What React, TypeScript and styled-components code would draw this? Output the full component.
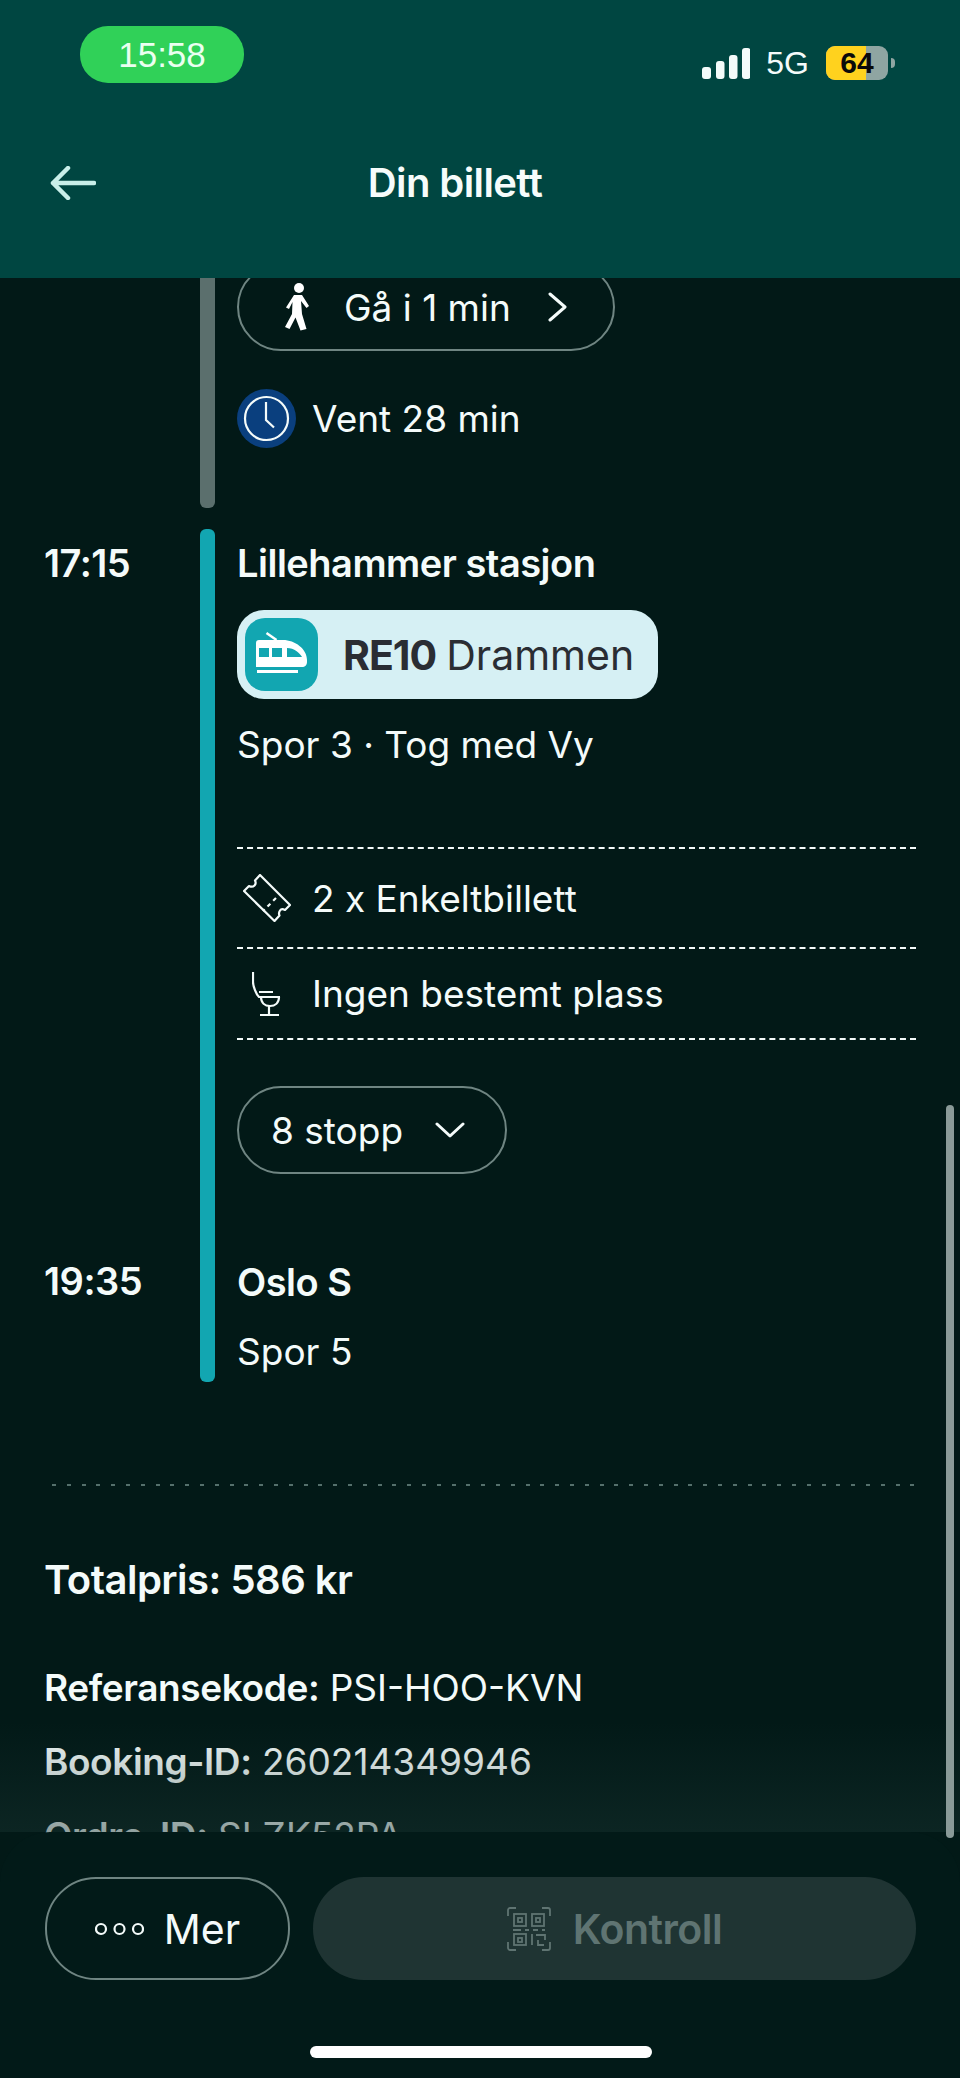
import React from 'react';
import styled, { createGlobalStyle } from 'styled-components';

const Global = createGlobalStyle`
  html, body {
    margin: 0;
    padding: 0;
    background: #021917;
  }
  * {
    box-sizing: border-box;
  }
`;

const APP_FONT = `Inter, "Open Sans", sans-serif`;

const Screen = styled.div`
  position: relative;
  width: 960px;
  height: 2078px;
  display: flex;
  flex-direction: column;
  overflow: hidden;
  background: #021917;
  color: #f4fbfa;
  font-family: ${APP_FONT};
`;

const Header = styled.header`
  position: relative;
  z-index: 2;
  flex: none;
  height: 278px;
  background: #004641;
  display: flex;
  flex-direction: column;
`;

const StatusBar = styled.div`
  height: 110px;
  padding: 26px 65px 0 80px;
  display: flex;
  justify-content: space-between;
  align-items: flex-start;
`;

const TimePill = styled.div`
  width: 164px;
  height: 57px;
  border-radius: 28px;
  background: #30d158;
  display: flex;
  align-items: center;
  justify-content: center;
  font-family: "Liberation Sans", sans-serif;
  font-size: 35px;
  color: #eafff0;
`;

const StatusRight = styled.div`
  margin-top: 20px;
  display: flex;
  align-items: center;
  height: 34px;
`;

const NetworkLabel = styled.span`
  margin: 0 17px 0 16px;
  font-family: "Liberation Sans", sans-serif;
  font-size: 32px;
  line-height: 34px;
  color: #f4fbfa;
`;

const Battery = styled.div`
  position: relative;
  width: 62px;
  height: 34px;
  border-radius: 9px;
  overflow: hidden;
  background: #8fa5a2;
  display: flex;
  align-items: center;
  justify-content: center;
  font-family: "Liberation Sans", sans-serif;
  font-weight: 700;
  font-size: 30px;
  color: #0a0a0a;
`;

const BatteryLevel = styled.div`
  position: absolute;
  left: 0;
  top: 0;
  bottom: 0;
  background: #ffd21e;
`;

const BatteryLabel = styled.span`
  position: relative;
`;

const BatteryNub = styled.div`
  width: 4px;
  height: 10px;
  margin-left: 3px;
  border-radius: 0 4px 4px 0;
  background: #8fa5a2;
`;

const NavBar = styled.div`
  flex: 1;
  padding: 0 50px 22px;
  display: flex;
  align-items: center;
`;

const NavTitle = styled.h1`
  flex: 1;
  margin: 0 96px 0 0;
  text-align: center;
  font-size: 40px;
  line-height: 48px;
  font-weight: 600;
  letter-spacing: -0.6px;
  color: #f6fcfb;
`;

const Scroller = styled.main`
  margin-top: -15px;
  flex: 1;
  min-height: 0;
`;

const Leg = styled.section<{ $height: number }>`
  height: ${(p) => p.$height}px;
  padding-left: 44px;
  display: flex;
`;

const TimeColumn = styled.div`
  flex: none;
  width: 156px;
  display: flex;
  flex-direction: column;
`;

const LegTime = styled.div<{ $top: number }>`
  margin-top: ${(p) => p.$top}px;
  font-size: 38px;
  line-height: 48px;
  font-weight: 600;
  letter-spacing: -0.5px;
`;

const Rail = styled.div<{ $color: string }>`
  flex: none;
  width: 15px;
  border-radius: 0 0 6px 6px;
  background: ${(p) => p.$color};
`;

const RideRail = styled(Rail)`
  border-radius: 6px;
`;

const LegBody = styled.div`
  flex: 1;
  margin: 0 44px 0 22px;
  display: flex;
  flex-direction: column;
  align-items: flex-start;
`;

const OutlinePill = styled.div<{ $width: number }>`
  width: ${(p) => p.$width}px;
  height: 88px;
  border: 2px solid #6f8582;
  border-radius: 44px;
  display: flex;
  align-items: center;
  font-size: 37px;
`;

const WaitRow = styled.div`
  margin-top: 38px;
  display: flex;
  align-items: center;
  gap: 16px;
  font-size: 37px;
  line-height: 59px;
`;

const StopName = styled.div<{ $top: number }>`
  margin-top: ${(p) => p.$top}px;
  font-size: 38px;
  line-height: 48px;
  font-weight: 600;
  letter-spacing: -0.5px;
`;

const LineBadge = styled.div`
  margin-top: 23px;
  width: 421px;
  height: 89px;
  padding: 8px;
  border-radius: 27px;
  background: #d6f0f4;
  color: #2a2d33;
  display: flex;
  align-items: center;
  font-size: 41px;
`;

const LineIcon = styled.div`
  width: 73px;
  height: 73px;
  border-radius: 20px;
  background: #12a6b1;
  margin-right: 25px;
  flex: none;
`;

const LineCode = styled.strong`
  font-weight: 700;
  letter-spacing: -1px;
  margin-right: 10px;
`;

const Detail = styled.div<{ $top: number }>`
  margin-top: ${(p) => p.$top}px;
  font-size: 37px;
  line-height: 48px;
`;

const InfoRow = styled.div<{ $height: number }>`
  align-self: stretch;
  height: ${(p) => p.$height}px;
  border-bottom: 2px dashed #f4fbfa;
  display: flex;
  align-items: center;
  font-size: 37px;
`;

const InfoList = styled.div`
  align-self: stretch;
  margin-top: 78px;
  border-top: 2px dashed #f4fbfa;
`;

const InfoIcon = styled.div`
  width: 75px;
  display: flex;
  justify-content: center;
  padding-right: 16px;
  flex: none;
`;

const StopsPill = styled(OutlinePill)`
  margin-top: 46px;
  padding-left: 32px;
`;

const Divider = styled.div`
  height: 2px;
  margin: 102px 44px 0 52px;
  background: repeating-linear-gradient(to right, #55706c 0 4px, transparent 4px 14.8px);
`;

const Summary = styled.div`
  padding: 0 44px;
`;

const TotalPrice = styled.div`
  margin-top: 70px;
  font-size: 40px;
  line-height: 48px;
  font-weight: 600;
  letter-spacing: -0.5px;
`;

const BookingLine = styled.div<{ $top: number }>`
  margin-top: ${(p) => p.$top}px;
  font-size: 37px;
  line-height: 48px;
  strong {
    font-weight: 600;
    letter-spacing: -0.4px;
  }
`;

const Haze = styled.div`
  position: absolute;
  left: 0;
  right: 0;
  bottom: 246px;
  height: 110px;
  background: linear-gradient(to bottom, rgba(24, 52, 49, 0), rgba(24, 52, 49, 0.45));
  pointer-events: none;
`;

const Scrollbar = styled.div`
  position: absolute;
  right: 6px;
  top: 1105px;
  width: 8px;
  height: 733px;
  border-radius: 4px;
  background: #8a9a98;
`;

const BottomSheet = styled.footer`
  position: absolute;
  left: 0;
  right: 0;
  bottom: 0;
  height: 246px;
  padding: 45px 44px 0 45px;
  border-radius: 50px 50px 0 0;
  background: #021a18;
`;

const ButtonRow = styled.div`
  display: flex;
  gap: 23px;
`;

const MoreButton = styled.button`
  flex: none;
  width: 245px;
  height: 103px;
  padding: 0;
  border: 2px solid #6f8582;
  border-radius: 51px;
  background: transparent;
  color: #f4fbfa;
  font-family: ${APP_FONT};
  font-size: 41px;
  display: flex;
  align-items: center;
  justify-content: center;
  gap: 20px;
`;

const ControlButton = styled.button`
  flex: 1;
  height: 103px;
  padding: 0;
  border: none;
  border-radius: 51px;
  background: #1f3433;
  color: #5f7472;
  font-family: ${APP_FONT};
  font-size: 41px;
  font-weight: 600;
  letter-spacing: -0.5px;
  display: flex;
  align-items: center;
  justify-content: center;
  gap: 22px;
`;

const HomeIndicator = styled.div`
  width: 342px;
  height: 12px;
  margin: 66px auto 0;
  border-radius: 6px;
  background: #ffffff;
`;

const PillIcon = styled.div<{ $left: number; $right: number }>`
  flex: none;
  display: flex;
  margin: 0 ${(p) => p.$right}px 0 ${(p) => p.$left}px;
`;

const SignalBars = () => (
  <svg width="48" height="31" viewBox="0 0 48 31" fill="#f4fbfa">
    <rect x="0" y="19" width="9" height="12" rx="3" />
    <rect x="14" y="13" width="8.5" height="18" rx="3" />
    <rect x="27" y="7" width="8.5" height="24" rx="3" />
    <rect x="40" y="0" width="8.5" height="31" rx="3" />
  </svg>
);

const BackArrow = () => (
  <svg width="46" height="34" viewBox="0 0 46 34" fill="none" stroke="#c9efe9" strokeWidth="4.5" strokeLinecap="round" strokeLinejoin="round">
    <path d="M44 17H3M18 2 3 17l15 15" />
  </svg>
);

const Walker = () => (
  <svg width="25" height="48" viewBox="0 0 25 48" fill="#ffffff">
    <circle cx="14" cy="5" r="5" />
    <path d="M9 12h8l7 11-2.500 2-5.500-7 1 13 4.500 15-6 1.500-5-13-6 11.500L0 44l7-13 .5-12-3.500 7-3-1.500z" />
  </svg>
);

const Clock = () => (
  <svg width="59" height="59" viewBox="0 0 59 59" fill="none">
    <circle cx="29.500" cy="29.500" r="29.500" fill="#0a3f7e" />
    <circle cx="29.500" cy="29.500" r="21.500" stroke="#f4fbfa" strokeWidth="2.200" />
    <path d="M29 13v18l8 7.500" stroke="#f4fbfa" strokeWidth="2.200" />
  </svg>
);

const Train = () => (
  <svg width="73" height="73" viewBox="0 0 73 73">
    <path d="M21.500 15 31.500 22" stroke="#fff" strokeWidth="2.500" />
    <path fillRule="evenodd" fill="#fff" d="M14 22h24c12 0 24 9 24 20v2c0 3-2 5-5 5H11V25c0-2 1-3 3-3zM14 30v9h10v-9zM27 30v9h10v-9zM42 30v9h15c-2-4-8-9-15-9z" />
    <rect x="12" y="52" width="41" height="3" fill="#fff" />
  </svg>
);

const Ticket = () => (
  <svg width="48" height="48" viewBox="0 0 48 48" fill="none" stroke="#f4fbfa" strokeWidth="2.200" strokeLinejoin="round">
    <path d="M17 1 47 31l-5 5c-2-1-4-1-5 .5s-1.500 3-.5 5l-5 5.500L1 17l5-5c2 1 4 1 5.500-.5s1.500-3 .5-5z" />
    <path d="M33 24 20 37" strokeDasharray="4 4" />
  </svg>
);

const Seat = () => (
  <svg width="30" height="44" viewBox="0 0 30 44" fill="none" stroke="#f4fbfa" strokeWidth="2.200" strokeLinejoin="round">
    <path d="M1 0v10c0 4 3 12 6 15h21" />
    <path d="M7 20h14M9 25c0 6 4 9 9 9s9-3 9-9M17 34v9M8 43h19" />
  </svg>
);

const Chevron = ({ down }: { down?: boolean }) => (
  <svg width={down ? 30 : 20} height={down ? 16 : 30} viewBox={down ? '0 0 30 16' : '0 0 20 30'} fill="none" stroke="#f4fbfa" strokeWidth="3" strokeLinecap="round" strokeLinejoin="round">
    <path d={down ? 'M2 2l13 12L28 2' : 'M2 2l15 13L2 28'} />
  </svg>
);

const Dots = () => (
  <svg width="49" height="14" viewBox="0 0 49 14" fill="none" stroke="#f4fbfa" strokeWidth="2.200">
    <circle cx="6" cy="7" r="5" />
    <circle cx="24.500" cy="7" r="5" />
    <circle cx="43" cy="7" r="5" />
  </svg>
);

const QrCode = () => (
  <svg width="44" height="44" viewBox="0 0 44 44" fill="none" stroke="#5f7472" strokeWidth="1.800">
    <path d="M1 9V3c0-1 1-2 2-2h6M35 1h6c1 0 2 1 2 2v6M43 35v6c0 1-1 2-2 2h-6M9 43H3c-1 0-2-1-2-2v-6" />
    <rect x="7" y="7" width="12" height="12" />
    <rect x="25" y="7" width="12" height="12" />
    <rect x="7" y="27" width="12" height="11" />
    <rect x="11" y="11" width="4" height="4" />
    <rect x="29" y="11" width="4" height="4" />
    <rect x="11" y="31" width="4" height="4" />
    <path d="M6 23h8M18 23h4M26 23h5M35 23h3M25 27v11M29 28h9v5M31 33v5h6" />
  </svg>
);

export default function App() {
  return (
    <Screen>
      <Global />
      <Header>
        <StatusBar>
          <TimePill>15:58</TimePill>
          <StatusRight>
            <SignalBars />
            <NetworkLabel>5G</NetworkLabel>
            <Battery>
              <BatteryLevel style={{ width: '64%' }} />
              <BatteryLabel>64</BatteryLabel>
            </Battery>
            <BatteryNub />
          </StatusRight>
        </StatusBar>
        <NavBar>
          <BackArrow />
          <NavTitle>Din billett</NavTitle>
        </NavBar>
      </Header>

      <Scroller>
        <Leg $height={245}>
          <TimeColumn />
          <Rail $color="#5b6f6d" />
          <LegBody>
            <OutlinePill $width={378}>
              <PillIcon $left={46} $right={34}>
                <Walker />
              </PillIcon>
              Gå i 1 min
              <PillIcon $left={37} $right={0}>
                <Chevron />
              </PillIcon>
            </OutlinePill>
            <WaitRow>
              <Clock />
              Vent 28 min
            </WaitRow>
          </LegBody>
        </Leg>

        <Leg $height={853} style={{ marginTop: 21 }}>
          <TimeColumn>
            <LegTime $top={10}>17:15</LegTime>
            <LegTime $top={670}>19:35</LegTime>
          </TimeColumn>
          <RideRail $color="#12a6b1" />
          <LegBody>
            <StopName $top={10}>Lillehammer stasjon</StopName>
            <LineBadge>
              <LineIcon>
                <Train />
              </LineIcon>
              <LineCode>RE10</LineCode>
              Drammen
            </LineBadge>
            <Detail $top={22}>Spor 3 · Tog med Vy</Detail>
            <InfoList>
              <InfoRow $height={100}>
                <InfoIcon>
                  <Ticket />
                </InfoIcon>
                2 x Enkeltbillett
              </InfoRow>
              <InfoRow $height={91}>
                <InfoIcon>
                  <Seat />
                </InfoIcon>
                Ingen bestemt plass
              </InfoRow>
            </InfoList>
            <StopsPill $width={270}>
              8 stopp
              <PillIcon $left={32} $right={0}>
                <Chevron down />
              </PillIcon>
            </StopsPill>
            <StopName $top={84}>Oslo S</StopName>
            <Detail $top={22}>Spor 5</Detail>
          </LegBody>
        </Leg>

        <Divider />

        <Summary>
          <TotalPrice>Totalpris: 586 kr</TotalPrice>
          <BookingLine $top={60}>
            <strong>Referansekode:</strong> PSI-HOO-KVN
          </BookingLine>
          <BookingLine $top={26}>
            <strong>Booking-ID:</strong> 260214349946
          </BookingLine>
          <BookingLine $top={26}>
            <strong>Ordre-ID:</strong> SLZK52PA
          </BookingLine>
        </Summary>
      </Scroller>

      <Haze />
      <Scrollbar />

      <BottomSheet>
        <ButtonRow>
          <MoreButton>
            <Dots />
            Mer
          </MoreButton>
          <ControlButton>
            <QrCode />
            Kontroll
          </ControlButton>
        </ButtonRow>
        <HomeIndicator />
      </BottomSheet>
    </Screen>
  );
}
